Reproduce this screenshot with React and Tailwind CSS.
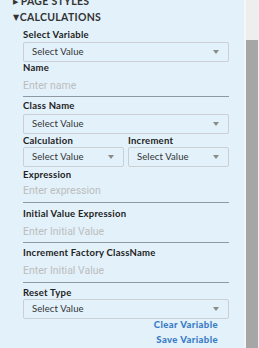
const label = "block h-[11px] leading-[11px] text-[9.5px] font-bold text-[#222] tracking-[0.25px]";
const font = { fontFamily: '"Lato", "DejaVu Sans", sans-serif' };

const SelectBox = ({ className = '' }) => (
  <div className={`h-[20px] border border-[#cbcfd2] rounded-[2px] flex items-center justify-between pl-[8px] pr-[9px] ${className}`}>
    <span className="text-[9.5px] text-[#333] tracking-[0.1px]">Select Value</span>
    <span className="w-0 h-0 border-l-[3.5px] border-r-[3.5px] border-t-[4px] border-l-transparent border-r-transparent border-t-[#8a8a8a]" />
  </div>
);

const TextLine = ({ placeholder, className = '' }) => (
  <div className={`border-b border-[#8d99a3] flex items-center ${className}`}>
    <span className="text-[10.5px] text-[#bdbdbd]" style={{ fontFamily: 'Roboto, sans-serif' }}>
      {placeholder}
    </span>
  </div>
);

export default function App() {
  return (
    <div className="w-[259px] h-[348px] flex overflow-hidden bg-white" style={font}>
      {/* panel */}
      <div className="w-[244px] h-full bg-[#e2f1fa] overflow-hidden">
        <div className="-mt-[5px] flex flex-col">
          <div className="h-[12px] leading-[12px] pl-[13px] text-[10.5px] font-bold text-[#333] flex items-center tracking-[0.3px]">
            <span className="text-[7px] mr-[2px]">▶</span>PAGE STYLES
          </div>
          <div className="h-[22px] pl-[13px] text-[10.5px] font-bold text-[#333] flex items-center tracking-[0.3px]">
            <span className="text-[8px] mr-[0.5px] tracking-normal" style={{ fontFamily: '"DejaVu Sans", sans-serif' }}>▼</span>CALCULATIONS
          </div>

          <div className="pl-[23px] w-[229px] flex flex-col">
            <span className={label}>Select Variable</span>
            <SelectBox className="mt-[2px]" />

            <span className={label}>Name</span>
            <TextLine placeholder="Enter name" className="h-[24px] pt-[3px]" />

            <span className={`${label} mt-[3px]`}>Class Name</span>
            <SelectBox className="mt-[3px]" />

            <div className="grid grid-cols-2 gap-x-[4px] mt-[1px]">
              <span className={label}>Calculation</span>
              <span className={label}>Increment</span>
              <SelectBox className="mt-[1px]" />
              <SelectBox className="mt-[1px]" />
            </div>

            <span className={`${label} mt-[2px]`}>Expression</span>
            <TextLine placeholder="Enter expression" className="h-[23px]" />

            <span className={`${label} mt-[5px]`}>Initial Value Expression</span>
            <TextLine placeholder="Enter Initial Value" className="h-[24px] pt-[2px]" />

            <span className={`${label} mt-[4px]`}>Increment Factory ClassName</span>
            <TextLine placeholder="Enter Initial Value" className="h-[25px] pt-[2px]" />

            <span className={`${label} mt-[4px]`}>Reset Type</span>
            <SelectBox className="mt-[1px]" />

            <div className="flex flex-col items-end pr-[11px]">
              <button className="h-[12px] leading-[12px] text-[9.5px] font-black text-[#3a7cc6] tracking-[0.4px]">Clear Variable</button>
              <button className="h-[12px] leading-[12px] mt-[3px] text-[9.5px] font-black text-[#3a7cc6] tracking-[0.4px]">Save Variable</button>
            </div>
          </div>
        </div>
      </div>

      {/* scrollbar */}
      <div className="w-[2px] h-full bg-[#f6f6f6]" />
      <div className="w-[12px] h-full flex flex-col bg-[#eeeeee]">
        <div className="h-[40px]" />
        <div className="flex-1 bg-[#a6a6a6]" />
      </div>
      <div className="w-[1px] h-full bg-[#f0f0f0]" />
    </div>
  );
}
